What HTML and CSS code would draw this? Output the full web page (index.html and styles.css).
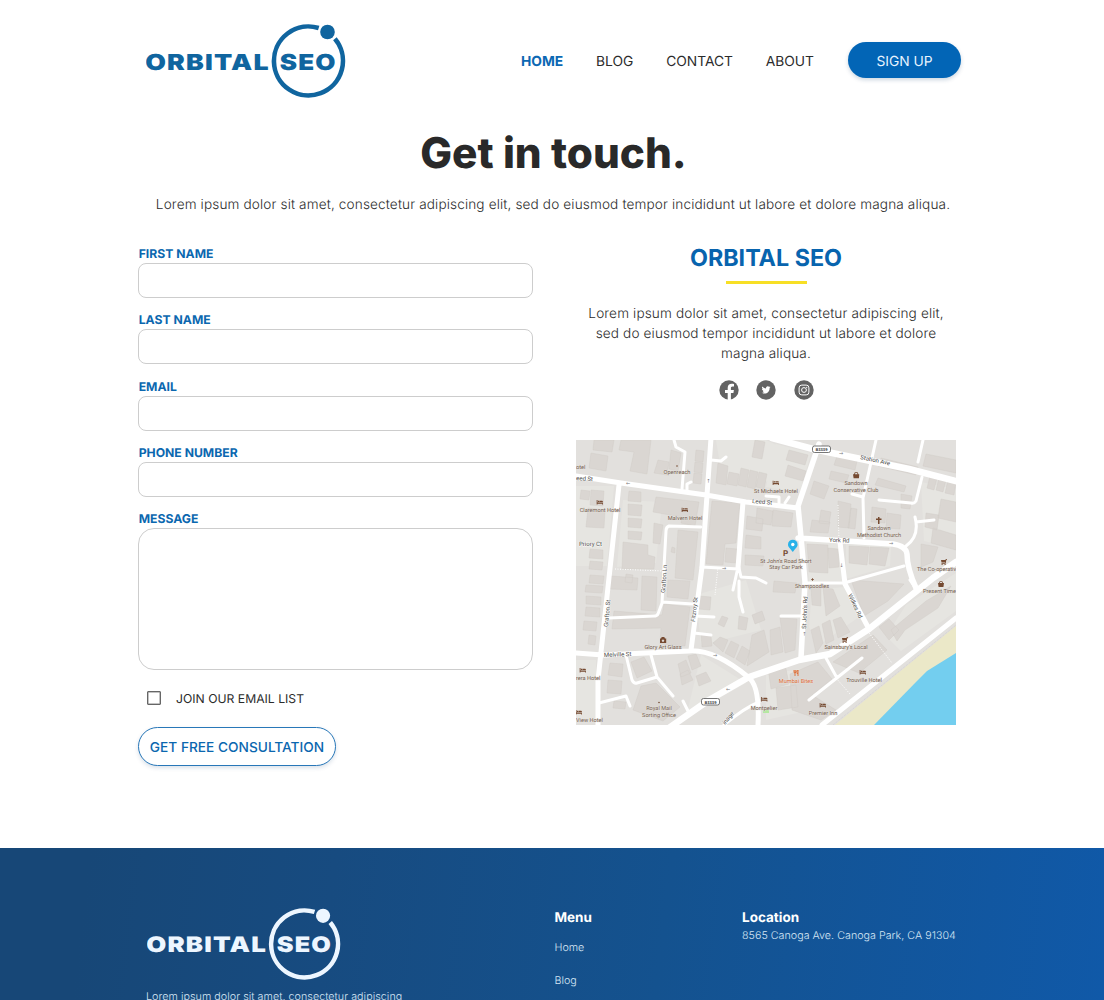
FILE: index.html
```html
<!DOCTYPE html>
<html lang="en">
<head>
<meta charset="utf-8">
<title>Orbital SEO – Get in touch</title>
<link rel="stylesheet" href="styles.css">
</head>
<body>
<svg class="defs" aria-hidden="true">
  <symbol id="logo" viewBox="0 0 200 75">
    <g fill="currentColor">
      <text class="logo-text" x="-.8" y="46.500" textLength="124.500" lengthAdjust="spacingAndGlyphs">ORBITAL</text>
      <text class="logo-text" x="133.700" y="46.500" textLength="57" lengthAdjust="spacingAndGlyphs">SEO</text>
      <circle cx="181.500" cy="9" r="7.300"/>
    </g>
    <path d="M172.700 5A34.500 34.500 0 1 0 188.900 15.800" fill="none" stroke="currentColor" stroke-width="4.600"/>
  </symbol>
  <symbol id="bed" viewBox="0 0 8 6"><path d="M0 0h1v3h6.500v2.500h-1v-1H1v1H0zM1.500 1h1.300v1.500H1.500zM3.200.8h3.300q1 0 1 1.700H3.200z"/></symbol>
  <symbol id="bag" viewBox="0 0 6 6"><path d="M0 2h1q0-2 2-2t2 2h1l-.6 4H.6zM1.800 2h2.400Q4 .8 3 .8T1.800 2z" fill-rule="evenodd"/></symbol>
  <symbol id="cart" viewBox="0 0 6 6"><path d="M6 0H4.800l-.3 1H0l.5 2.500h3.600l-.1.500H.5v.7h4.100L5.400.7H6zM.6 5h1v1h-1zM3.600 5h1v1h-1z"/></symbol>
</svg>

<header class="header">
  <svg class="logo" viewBox="0 0 200 75"><use href="#logo"/></svg>
  <nav class="nav">
    <a class="nav-link active">HOME</a>
    <a class="nav-link">BLOG</a>
    <a class="nav-link">CONTACT</a>
    <a class="nav-link">ABOUT</a>
    <a class="signup">SIGN UP</a>
  </nav>
</header>

<main class="main">
  <h1 class="title">Get in touch.</h1>
  <p class="intro">Lorem ipsum dolor sit amet, consectetur adipiscing elit, sed do eiusmod tempor incididunt ut labore et dolore magna aliqua.</p>
  <div class="columns">
    <form class="form">
      <label class="field"><span class="label">FIRST NAME</span><input class="input" type="text"></label>
      <label class="field"><span class="label">LAST NAME</span><input class="input" type="text"></label>
      <label class="field"><span class="label">EMAIL</span><input class="input" type="text"></label>
      <label class="field"><span class="label">PHONE NUMBER</span><input class="input" type="text"></label>
      <label class="field"><span class="label">MESSAGE</span><textarea class="input message"></textarea></label>
      <label class="join"><input class="checkbox" type="checkbox"><span>JOIN OUR EMAIL LIST</span></label>
      <button class="submit" type="button">GET FREE CONSULTATION</button>
    </form>
    <section class="info">
      <h2 class="company">ORBITAL SEO</h2>
      <div class="rule"></div>
      <p class="about">Lorem ipsum dolor sit amet, consectetur adipiscing elit,<br>sed do eiusmod tempor incididunt ut labore et dolore<br>magna aliqua.</p>
      <div class="social">
        <svg class="social-icon" viewBox="0 0 20 20"><circle cx="10" cy="10" r="9.700" fill="#636363"/><path d="M8.700 20v-7H6v-2.900h2.700V7.800c0-2.700 1.600-4.100 4-4.100.9 0 1.700.1 2.300.2v2.500h-1.400c-1.300 0-1.700.8-1.700 1.600v2.100h3l-.5 2.900h-2.500v7z" fill="#fff"/></svg>
        <svg class="social-icon" viewBox="0 0 20 20"><circle cx="10" cy="10" r="9.700" fill="#636363"/><path d="M14.500 7.100c-.3.150-.7.250-1 .3.350-.25.650-.6.800-1-.35.200-.75.350-1.150.45A1.850 1.850 0 0 0 10 8.500c-1.500-.1-2.850-.8-3.750-1.900-.5.850-.25 1.900.55 2.450-.3 0-.6-.1-.8-.2 0 .9.600 1.650 1.450 1.800-.25.100-.55.100-.8 0 .2.750.9 1.250 1.700 1.300-.75.600-1.700.85-2.700.75 3.900 2.400 8-.2 8-4.650.35-.25.650-.6.850-.95z" fill="#fff"/></svg>
        <svg class="social-icon" viewBox="0 0 20 20"><circle cx="10" cy="10" r="9.700" fill="#636363"/><g fill="none" stroke="#fff"><rect x="5.100" y="5.100" width="9.800" height="9.800" rx="2.700"/><circle cx="10" cy="10" r="2.400"/></g><circle cx="12.700" cy="7.300" r=".65" fill="#fff"/></svg>
      </div>
      <svg class="map" viewBox="0 0 380 285">
        <rect width="380" height="285" fill="#e2e0dd"/>
        <!-- open ground -->
        <path class="open" d="M0 46h38l-7 80H0zM47 60l39 2-6 61-39 4zM200 4l35 9-11 39-34-5zM140 0h50l30 14-8 30-66-8zM230 100l33 3 4 38-34 1zM270 104l45 2-1 20-44 13zM125 215l45 28-60 34zM0 220h20v60H0zM330 165l50-32v38l-55 40-15-15zM120 155l50-15 15 50-60 15zM236 150l32-3 15 30-40 28-10-18zM190 235l55-10-10 45-45 10zM345 42l35 7v60l-32-8z"/>
        <!-- buildings -->
        <path class="building" d="M18 0h20l-2 12-19-2zM15 13l17 3-2 15-17-3zM45 0h30l-4 34-17-3 4-19-15-2zM82 20l11 2-2 13-13-2zM95 10l10 3-3 18-9-2zM120 10l8 1-1 11-8-1zM119 22l8 1-1 10-8-1zM118 33l8 1-1 10-8-1zM142 23l10 3-2 19-10-2zM153 32l10 2-2 12-10-2zM165 28l8 2-3 17-8-2zM174 30l8 2-3 17-8-2zM183 32l8 2-3 15-8-2z
        M5 50l9 1-1 9-9-1zM15 50l13 1-1 15-13-1zM12 68l17 2-1 18-18-1zM53 51l12 1v10l-13-1zM52 64l14 1-1 11-13-1zM52 78l14 1-1 9-13-1zM52 91l14 1-1 8-13-1zM80 57l43 5-4 24-14-3 1-6-29-5zM78 83l9 2-3 19-7-1zM47 102l25 3v10l7 2-1 12H46zM102 90l20 2-5 48-18-2zM96 107l3 1v5l-4-1zM14 109l13 1v9l-14-1zM14 121l13 1-1 8-13-1zM14 135l14 1-1 8-14-1zM50 134l7 1-1 8-7-1zM136 61l28 2-4 40-11 1-2 21-17-1zM150 108l11 1v14l-12-1zM171 76l16 3-1 12-16-2zM170 95l15 2v12l-16-1zM169 115l19 1-1 10-18-1zM181 68l16 3-2 14-15-2zM179 0l10 2-3 17-10-2z
        M35 136l27 2-1 12-27-1zM66 136l15 1-1 34-15-1zM92 140l22 1-2 18-21-2zM88 164l26 3-5 39-25-2 1-16-49 1 2-18 48 4zM10 145l17 1-1 7-17-1zM10 156l15 1v8l-15-1zM10 167l14 1v9l-15-1zM8 181l13 1-1 9-13-1zM13 195l7 1-1 9-7-1zM34 223l13 1-1 13-14-2zM32 240l14 1-1 13-14-1zM38 261l12 1-1 7-12-1zM55 222l13-5 8 14-15 7zM65 246l15-3 24 24-17 14-30-11zM102 224l8-4 5 13-10 4zM112 216l8-2 5 12-9 4zM120 236l10-4 5 9-12 5zM104 234l8-4 5 10-11 5zM146 176l6 2-4 9-6-3zM163 176l9 2-2 12-8-1zM176 175l10-4 3 9-10 4zM123 156l12 1-1 13-12-1zM125 194l10 2 1 10-10 1zM137 203l7-6 8 3-5 12zM149 213l6-12 8 4-5 13zM160 219l6-13 8 5-5 14zM171 226l5-31 12-5 5 22zM195 215l-1-25 10-3 3 25z
        M213 10l19 5-3 10-19-5zM212 25l18 6-3 10-18-5zM238 41l15 5-5 13-14-5zM261 16l20 5-2 9-21-5zM255 31l18 4-3 8-17-4zM305 18l37 9-2 8-38-9zM302 38l28 8-2 6-29-7zM350 14l30 6v13l-33-7zM354 36l7 2-3 12-7-2zM363 38l7 2-3 12-7-2zM372 40l8 2-2 13-9-2zM197 70l20 3-2 14-19-1zM245 70l10 2-2 12-10-1zM236 80l18 2-2 11-18-1zM262 61l13 3-2 24-11-1zM275 68l6 1-2 20-7-1zM296 67l14 2-1 14-14-1zM311 73l14 2-1 14-14-1zM325 54l11 2-2 13-9-1zM350 73l13 2-2 15-12-3zM365 59l15 3v20l-18-4zM231 104l21 1v28l-19-1zM252 108l10 1 1 18-10 1zM273 106l20 1-2 18-18-2zM294 107l19 1-4 18-16-2zM345 104l17 3-5 15-12 5z
        M198 141l23 2-2 10-22-1zM204 178l17 1-2 31-10 3zM235 147l10 1v18l-9-1zM247 148l10 1 7 17-14 10zM235 190l8-4 4 17-7 10zM246 184l8-4 4 20-8 4zM257 180l8-3 9 15-12 6zM275 140l53 4-16 17-24 15zM315 190l35-29 25-15-13 22-33 22-8 11zM297 195l14 15-28 23-26-11zM214 234l28-12 14 17-20 16 24 15-15 10-29-10zM192 228l17-4 4 20-18 5zM357 88l23 7v15l-25-7zM303 187l10-8 10 11-10 10zM200 248l20-3 2 22-20 3z"/>
        <!-- beach and sea -->
        <path d="M380 186V285H259L316 238z" fill="#ebe8c8"/>
        <path d="M380 213V285H298L341 241 351 231z" fill="#73ceef"/>
        <path d="M187 269h6v4h-6z" fill="#b4e8a1"/>
        <path d="M39 129l48 2M142 127l-3 28M262 65l1 35M293 193l23 30M260 238l14 16" fill="none" stroke="#fff" stroke-dasharray="1 1.500"/>
        <path d="M257 285L380 185" fill="none" stroke="#cfcbd2" stroke-width=".8" stroke-dasharray="1 1"/>
        <!-- streets -->
        <g fill="none" stroke="#fff" stroke-linejoin="round" stroke-linecap="round">
          <path stroke-width="3" d="M98 0l2 7 9 5-3 37M111 50v-6l4-2M135 20l10 1 5-4M125 87l-32-1q-3 1-3 5l-4 72-4 11q-1 2-4 2l-45 2M86 162l31 2M125 127l38 2M163 128l2 9 15 1 10 5M157 150l5-23M163 141v16l4 15M119 176l19 1M118 193l17 2M50 215l6 25q2 4 5 3l20-6-6-22M81 237l16 19M107 261l6 12M23 263l27-7 4 10M183 262q-15 6-35 23M190 56l13 1v6M213 57l-4 6M300 0l-13 58 1 40M287 57l-11-3M347 0l-5 22M346 37l-6 24q-2 3-5 2l-32-3M330 106q14-10 9-29M340 82l18-2M229 143h39l60-17M205 176h20M250 218l11 20M286 218l-53 42M334 140l6 9"/>
          <path stroke-width="5" d="M0 213l27 2 86-4q25-2 59 26 12 8 10 48M43 45L22 240v45M135-2l-9 129-11 83M167 62l-5 66M0 36l45 7 85 12 40 7 52 6M264 102l5 42 24 45M380 178L246 285"/>
          <path stroke-width="5.500" d="M243 4l-21 62 3 31 4 45-4 76M222 98l95 6q13 2 14 10 0 14 9 34"/>
          <path stroke-width="6.500" d="M196-2l41 11 96 20 50 13M90 290l43-30 40-23 50-17 31-6 39-25 30-24 34-27 23-16"/>
        </g>
        <g class="road-name">
          <text x="0" y="40" transform="rotate(4 0 41)">eed St</text>
          <text x="176" y="63" transform="rotate(5 176 64)">Leed St</text>
          <text x="3" y="105.500">Priory Ct</text>
          <text x="284" y="19" transform="rotate(12 284 19)">Station Ave</text>
          <text x="253" y="102" transform="rotate(2 253 102)">York Rd</text>
          <text x="28" y="217" transform="rotate(-2 28 217)">Melville St</text>
          <text x="32" y="187" transform="rotate(-85 32 187)">Grafton St</text>
          <text x="89" y="153" transform="rotate(-86 89 153)">Grafton Ln</text>
          <text x="119" y="182" transform="rotate(-84 119 182)">Fitzroy St</text>
          <text x="230" y="189" transform="rotate(-87 230 189)">St John's Rd</text>
          <text x="272" y="155" transform="rotate(65 272 155)">Wilkes Rd</text>
          <text x="149" y="285" transform="rotate(-50 149 285)">inage</text>
        </g>
        <g class="place">
          <text x="0" y="29" class="start">otel</text>
          <text x="101" y="34">Openreach</text><text x="24" y="72">Claremont Hotel</text><text x="109" y="80">Malvern Hotel</text><text x="200" y="53">St Michaels Hotel</text>
          <text x="280" y="45">Sandown</text><text x="280" y="52">Conservative Club</text><text x="303" y="89.500">Sandown</text><text x="303" y="96.500">Methodist Church</text>
          <text x="210" y="122.500">St John's Road Short</text><text x="210" y="129">Stay Car Park</text><text x="236" y="148">Shampoodles</text>
          <text x="341" y="131" class="start">The Co-operativ</text><text x="347" y="153" class="start">Present Time</text>
          <text x="87" y="209">Glory Art Glass</text><text x="0" y="240" class="start">rera Hotel</text><text x="0" y="282" class="start">View Hotel</text>
          <text x="83" y="270">Royal Mail</text><text x="83" y="277">Sorting Office</text><text x="270" y="209">Sainsbury's Local</text><text x="288" y="242">Trouville Hotel</text><text x="188" y="269.500">Montpelier</text><text x="247" y="275">Premier Inn</text>
          <text x="220" y="243" class="food">Mumbai Bites</text>
        </g>
        <g fill="#754a31">
          <use href="#bed" x="20" y="60" width="8" height="5"/><use href="#bed" x="105" y="67.500" width="8" height="5"/><use href="#bed" x="196" y="40.500" width="8" height="5"/><use href="#bed" x="3" y="228" width="8" height="5"/><use href="#bed" x="-1" y="270" width="8" height="5"/><use href="#bed" x="283" y="230" width="8" height="5"/><use href="#bed" x="185" y="257" width="7" height="5"/><use href="#bed" x="243" y="263" width="8" height="5"/>
          <use href="#bag" x="277" y="32" width="6.500" height="6.500"/><use href="#bag" x="362" y="141" width="6" height="6"/><use href="#cart" x="365" y="119" width="6" height="6"/><use href="#cart" x="266" y="197" width="6" height="6"/>
          <path d="M302 77h1.500v1.500h2V80h-2v4H302v-4h-2v-1.500h2zM84 198.500h1l.7-1.500h2.600l.7 1.500h1.200v4.500H84zM87 199.500a1.200 1.200 0 1 0 .01 0z" fill-rule="evenodd"/>
          <circle cx="101" cy="26" r=".8"/><circle cx="83" cy="262.500" r=".8"/><path d="M236.500 138v3M235 139.500h3" stroke="#754a31" stroke-width=".7"/>
          <text class="parking" x="207" y="115.500">P</text>
        </g>
        <path d="M218 230v2q0 1 1 1v3M219 230v3M220 230v2l-1 1M222 236v-6q-1.500 1-1 3.500h1" fill="none" stroke="#e06c32" stroke-width=".9"/>
        <g class="arrows"><text x="50" y="45">←</text><text x="146" y="130">→</text><text x="263" y="15">→</text><text x="313" y="105">→</text><text x="137" y="217">→</text><text x="150" y="251">←</text><text x="130" y="43" transform="rotate(-90 132 41)">→</text><text x="263" y="128" transform="rotate(90 266 126)">→</text><text x="225" y="195" transform="rotate(-90 228 193)">→</text></g>
        <g class="shield"><rect x="236.500" y="6" width="18" height="6.500" rx="2"/><rect x="125.500" y="258.500" width="18" height="6.500" rx="2"/><text x="245.500" y="11">B3339</text><text x="134.500" y="263.500">B3339</text></g>
        <path d="M216.800 112C214 108 212 107 212 104.500a4.800 4.800 0 0 1 9.600 0c0 2.500-2 3.500-4.800 7.500z" fill="#29b2e9"/><circle cx="216.800" cy="104.500" r="1.700" fill="#fff"/>
      </svg>
    </section>
  </div>
</main>

<footer class="footer">
  <div class="footer-brand">
    <svg class="footer-logo" viewBox="0 0 200 75"><use href="#logo"/></svg>
    <p class="footer-text">Lorem ipsum dolor sit amet, consectetur adipiscing</p>
  </div>
  <div class="footer-menu">
    <h3 class="footer-title">Menu</h3>
    <a class="footer-link">Home</a>
    <a class="footer-link">Blog</a>
  </div>
  <div class="footer-location">
    <h3 class="footer-title">Location</h3>
    <p class="address">8565 Canoga Ave. Canoga Park, CA 91304</p>
  </div>
</footer>
</body>
</html>
```
FILE: styles.css
```css
* { box-sizing: border-box; }
body { margin: 0; height: 1000px; overflow: hidden; background: #fff; color: #2b2b2b; font-family: Inter, "Liberation Sans", sans-serif; display: flex; flex-direction: column; text-rendering: geometricPrecision; }
h1, h2, h3, p { margin: 0; }
.defs { display: none; }
.logo-text { font-family: Inter, sans-serif; font-weight: 900; font-size: 22px; letter-spacing: 1px; }

.header { height: 122px; padding: 23px 143px 0 146px; display: flex; justify-content: space-between; align-items: flex-start; flex-shrink: 0; }
.logo { width: 200px; height: 75px; color: #10659f; }
.nav { display: flex; align-items: center; padding-top: 19px; font-size: 13.800px; line-height: 20px; }
.nav-link { margin-right: 32.800px; padding-top: 4px; }
.nav-link:nth-child(4) { margin-right: 34px; }
.active { color: #0b68b3; font-weight: 700; }
.signup { width: 113px; height: 36px; line-height: 40px; border-radius: 18px; background: #0265b6; color: #e8f4ff; text-align: center; box-shadow: 0 2px 4px #00376b33; }

.main { height: 726px; flex-shrink: 0; padding: 0 148px 0 138px; }
.title { padding: 1px 0 0 13px; height: 62px; font-size: 42.300px; line-height: 61px; font-weight: 800; text-align: center; color: #292929; }
.intro { margin-top: 11px; padding-left: 12px; font-size: 13.600px; line-height: 20px; font-weight: 300; letter-spacing: .135px; text-align: center; white-space: nowrap; }
.columns { margin-top: 29px; display: flex; justify-content: space-between; }
.form { width: 395px; display: flex; flex-direction: column; align-items: flex-start; }
.field { width: 100%; height: 66.250px; display: block; }
.field:nth-child(5) { height: 163px; }
.label { display: block; height: 19px; padding-left: .7px; line-height: 19px; font-size: 12.200px; font-weight: 700; color: #0b67af; }
.input { display: block; width: 100%; height: 35px; border: 1px solid #cdcdcd; border-radius: 8px; background: #fff; outline: 0; }
.message { height: 142px; border-radius: 16px; resize: none; }
.join { margin-top: 16px; display: flex; align-items: center; gap: 15px; height: 20px; padding-left: 9px; font-size: 12.200px; }
.checkbox { appearance: none; margin: 0; width: 14px; height: 14px; border: 1.500px solid #666; border-radius: 1px; box-shadow: inset 0 0 0 .5px #888; }
.submit { margin-top: 19px; width: 198px; height: 39px; padding: 1px 0 0; border: 1px solid #2877b8; border-radius: 20px; background: #fff; color: #0b67af; font: 500 13.700px Inter, sans-serif; white-space: nowrap; box-shadow: 0 2px 4px #00376b26; }

.info { width: 380px; display: flex; flex-direction: column; align-items: center; }
.company { height: 30px; font-size: 23.300px; line-height: 27px; font-weight: 700; color: #0864ae; }
.rule { width: 81px; height: 3px; margin-top: 7px; background: #f7df25; }
.about { margin-top: 20px; font-size: 13.600px; line-height: 20px; font-weight: 300; letter-spacing: .13px; text-align: center; white-space: nowrap; }
.social { display: flex; gap: 17.500px; margin-top: 16px; }
.social-icon { width: 20px; height: 20px; }
.map { width: 380px; height: 285px; margin-top: 40px; }
.open { fill: #e6e5e1; }
.building { fill: #dad6d2; stroke: #cfcac6; stroke-width: .4; }
.road-name { font: 400 6px Roboto, sans-serif; fill: #4b4a48; stroke: #fff; stroke-width: .8; paint-order: stroke; }
.place { font: 400 5.600px Roboto, sans-serif; fill: #735e52; text-anchor: middle; stroke: #e9e5e0; stroke-width: .6; paint-order: stroke; }
.place .start { text-anchor: start; }
.place .food { fill: #dc6a35; }
.parking { font: 700 8px Inter, sans-serif; }
.arrows { font: 5px "DejaVu Sans", sans-serif; fill: #777; }
.shield { font: 700 4px "Open Sans", sans-serif; text-anchor: middle; fill: #444; }
.shield rect { fill: #fff; stroke: #555; stroke-width: .8; }

.footer { flex: 1; min-height: 0; padding: 59px 0 0 146px; display: flex; background: linear-gradient(97deg, #174777 8%, #174b80 30%, #14528f 60%, #1059a8 100%); color: #d7e7f5; overflow: hidden; font-size: 10.700px; font-weight: 300; }
.footer-brand { width: 408.500px; }
.footer-logo { display: block; width: 194px; height: 73px; margin-left: .7px; color: #edf6ff; }
.footer-text { margin-top: 9px; line-height: 16px; letter-spacing: .06px; white-space: nowrap; }
.footer-menu { width: 187.500px; display: flex; flex-direction: column; }
.footer-title { padding-top: 1px; font-size: 13.500px; line-height: 20px; font-weight: 700; color: #fff; }
.footer-link { margin-top: 10px; line-height: 20px; }
.footer-link + .footer-link { margin-top: 13px; }
.address { line-height: 16px; letter-spacing: .03px; }
```
